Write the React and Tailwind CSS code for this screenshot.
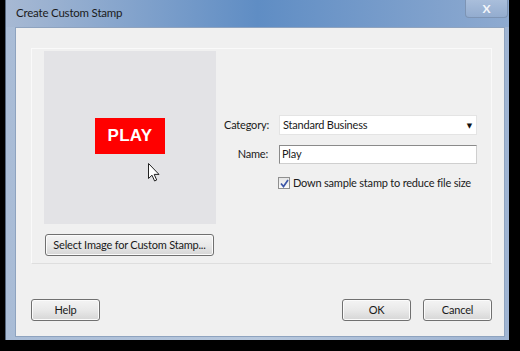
const font = { fontFamily: 'Lato, "Open Sans", "DejaVu Sans", sans-serif' }

function WinButton({ children, className = '' }) {
  return (
    <button
      className={`h-[22px] whitespace-nowrap rounded-[3px] border border-[#707070] bg-gradient-to-b from-[#f4f4f4] via-[#e9e9e9] to-[#d6d6d6] text-[11px] tracking-[-0.2px] text-[#1a1a1a] shadow-[inset_0_0_0_1px_#fbfbfb] ${className}`}
    >
      {children}
    </button>
  )
}

function Cursor() {
  return (
    <svg width="12" height="19" viewBox="0 0 12 19" className="self-start mt-[9px] ml-[104px]">
      <path
        d="M0.5 0.5 L0.5 15.5 L4 12.2 L6.6 18 L8.7 17 L6.2 11.4 L11 11.4 Z"
        fill="#ffffff"
        stroke="#222"
        strokeWidth="1"
        strokeLinejoin="round"
      />
    </svg>
  )
}

export default function App() {
  return (
    <div className="w-[520px] h-[351px] bg-black overflow-hidden" style={font}>
      <div className="ml-[5px] w-[504px] h-[340px] flex flex-col bg-gradient-to-r from-[#a9bcd6] via-[#b8c8dd] to-[#9fb4d2] border-l border-[#56677e]">
        {/* title bar */}
        <div className="h-[27px] flex items-start bg-gradient-to-r from-[#a7b9d3] via-[#5f8dc4] to-[#8eaad0]">
          <span className="ml-[10px] mt-[5px] text-[11.5px] tracking-[-0.2px] text-[#1b1b1b] leading-[16px] whitespace-nowrap">Create Custom Stamp</span>
          <div className="ml-auto mr-[1px] w-[43px] h-[18px] rounded-b-[4px] border border-t-0 border-[#7d94b4] bg-gradient-to-b from-[#a9bedb] to-[#93accf] flex items-center justify-center text-[#f4f6fa] text-[12px] font-bold leading-none">
            X
          </div>
        </div>

        {/* client area */}
        <div className="ml-[9px] mr-[4px] h-[310px] bg-[#f0f0f0] border border-[#8ea3bf] flex flex-col">
          <div className="mt-[20px] ml-[15px] w-[461px] h-[216px] border border-[#fafafa] border-b-[#dedede] flex">
            {/* left column */}
            <div className="ml-[12px] mt-[2px] flex flex-col">
              <div className="w-[172px] h-[173px] bg-[#e3e3e6] flex flex-col items-center">
                <div className="mt-[67px] w-[70px] h-[36px] bg-[#ff0000] flex items-center justify-center">
                  <span className="text-white text-[17px] font-bold tracking-[0.3px]" style={{ fontFamily: '"Liberation Sans", Arial, sans-serif' }}>
                    PLAY
                  </span>
                </div>
                <Cursor />
              </div>
              <WinButton className="mt-[10px] ml-[1px] w-[169px] h-[21px]">
                Select Image for Custom Stamp...
              </WinButton>
            </div>

            {/* right column */}
            <div className="ml-[8px] mt-[66px] flex flex-col text-[11px] tracking-[-0.2px] text-[#1a1a1a] whitespace-nowrap">
              <div className="flex items-center h-[20px]">
                <span className="w-[44px] text-right">Category:</span>
                <div className="ml-[11px] w-[198px] h-[20px] bg-white border border-[#e4e4e4] flex items-center pl-[3px]">
                  <span>Standard Business</span>
                  <span className="ml-auto mr-[4px] text-[7px] text-[#111]">▼</span>
                </div>
              </div>
              <div className="flex items-center h-[19px] mt-[10px]">
                <span className="w-[44px] text-right">Name:</span>
                <div className="ml-[11px] w-[198px] h-[19px] bg-white border border-[#cfcfcf] border-t-[#8a8a8a] border-l-[#8a8a8a] flex items-center pl-[2px]">
                  <span>Play</span>
                </div>
              </div>
              <div className="flex items-center mt-[11px] ml-[54px]">
                <div className="w-[12px] h-[12px] border border-[#8f8f8f] bg-gradient-to-b from-[#e6e6e6] to-[#fafafa] flex items-center justify-center">
                  <svg width="9" height="9" viewBox="0 0 9 9">
                    <path d="M1 4.5 L3.5 7.5 L8 1" fill="none" stroke="#3c56a8" strokeWidth="1.7" />
                  </svg>
                </div>
                <span className="ml-[3px]">Down sample stamp to reduce file size</span>
              </div>
            </div>
          </div>

          {/* bottom buttons */}
          <div className="mt-[35px] ml-[15px] mr-[12px] flex">
            <WinButton className="w-[69px]">Help</WinButton>
            <WinButton className="ml-auto w-[69px]">OK</WinButton>
            <WinButton className="ml-[12px] w-[69px]">Cancel</WinButton>
          </div>
        </div>
      </div>
    </div>
  )
}
